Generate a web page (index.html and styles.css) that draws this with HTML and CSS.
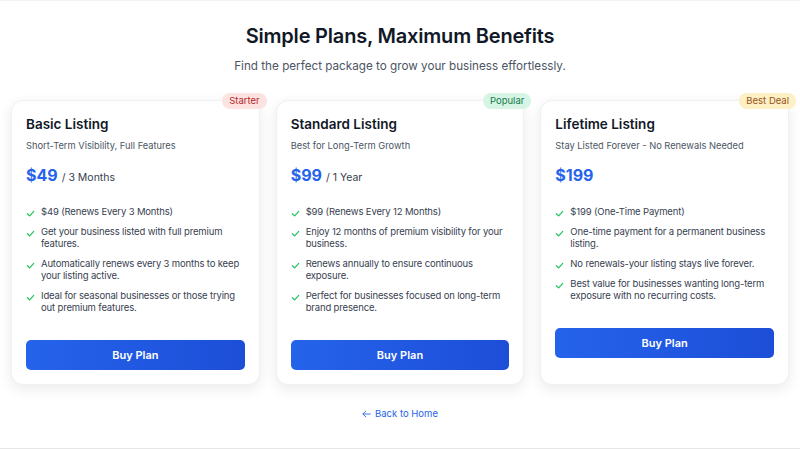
FILE: index.html
```html
<!DOCTYPE html>
<html lang="en">
<head>
<meta charset="utf-8">
<title>Simple Plans, Maximum Benefits</title>
<link rel="stylesheet" href="styles.css">
</head>
<body>
<div class="page">
  <header class="head">
    <h1 class="title">Simple Plans, Maximum Benefits</h1>
    <p class="lead">Find the perfect package to grow your business effortlessly.</p>
  </header>

  <section class="plans">
    <article class="card">
      <span class="badge badge-red">Starter</span>
      <h2 class="card-title">Basic Listing</h2>
      <p class="card-sub">Short-Term Visibility, Full Features</p>
      <div class="price"><span class="amount">$49</span><span class="period">/ 3 Months</span></div>
      <ul class="features">
        <li><svg class="check" viewBox="0 0 10 10"><polyline points="1.5,5.2 4,7.6 8.6,2.6"/></svg><span>$49 (Renews Every 3 Months)</span></li>
        <li><svg class="check" viewBox="0 0 10 10"><polyline points="1.5,5.2 4,7.6 8.6,2.6"/></svg><span>Get your business listed with full premium features.</span></li>
        <li><svg class="check" viewBox="0 0 10 10"><polyline points="1.5,5.2 4,7.6 8.6,2.6"/></svg><span>Automatically renews every 3 months to keep your listing active.</span></li>
        <li><svg class="check" viewBox="0 0 10 10"><polyline points="1.5,5.2 4,7.6 8.6,2.6"/></svg><span>Ideal for seasonal businesses or those trying out premium features.</span></li>
      </ul>
      <button class="buy">Buy Plan</button>
    </article>

    <article class="card">
      <span class="badge badge-green">Popular</span>
      <h2 class="card-title">Standard Listing</h2>
      <p class="card-sub">Best for Long-Term Growth</p>
      <div class="price"><span class="amount">$99</span><span class="period">/ 1 Year</span></div>
      <ul class="features">
        <li><svg class="check" viewBox="0 0 10 10"><polyline points="1.5,5.2 4,7.6 8.6,2.6"/></svg><span>$99 (Renews Every 12 Months)</span></li>
        <li><svg class="check" viewBox="0 0 10 10"><polyline points="1.5,5.2 4,7.6 8.6,2.6"/></svg><span>Enjoy 12 months of premium visibility for your business.</span></li>
        <li><svg class="check" viewBox="0 0 10 10"><polyline points="1.5,5.2 4,7.6 8.6,2.6"/></svg><span>Renews annually to ensure continuous exposure.</span></li>
        <li><svg class="check" viewBox="0 0 10 10"><polyline points="1.5,5.2 4,7.6 8.6,2.6"/></svg><span>Perfect for businesses focused on long-term brand presence.</span></li>
      </ul>
      <button class="buy">Buy Plan</button>
    </article>

    <article class="card">
      <span class="badge badge-amber">Best Deal</span>
      <h2 class="card-title">Lifetime Listing</h2>
      <p class="card-sub">Stay Listed Forever - No Renewals Needed</p>
      <div class="price"><span class="amount">$199</span></div>
      <ul class="features">
        <li><svg class="check" viewBox="0 0 10 10"><polyline points="1.5,5.2 4,7.6 8.6,2.6"/></svg><span>$199 (One-Time Payment)</span></li>
        <li><svg class="check" viewBox="0 0 10 10"><polyline points="1.5,5.2 4,7.6 8.6,2.6"/></svg><span>One-time payment for a permanent business listing.</span></li>
        <li><svg class="check" viewBox="0 0 10 10"><polyline points="1.5,5.2 4,7.6 8.6,2.6"/></svg><span>No renewals-your listing stays live forever.</span></li>
        <li><svg class="check" viewBox="0 0 10 10"><polyline points="1.5,5.2 4,7.6 8.6,2.6"/></svg><span>Best value for businesses wanting long-term exposure with no recurring costs.</span></li>
      </ul>
      <button class="buy">Buy Plan</button>
    </article>
  </section>

  <div class="back-row">
    <a class="back" href="#"><svg class="arrow" viewBox="0 0 12 10"><path d="M11 5H1.5M5 1.2L1.2 5L5 8.8"/></svg>Back to Home</a>
  </div>
</div>
</body>
</html>
```

FILE: styles.css
```css
* { box-sizing: border-box; }

html, body {
  margin: 0;
  padding: 0;
  background: #ffffff;
}

body {
  font-family: "Inter", "Noto Sans", sans-serif;
  color: #111827;
}

.page {
  border-top: 1px solid #f1f2f4;
  border-bottom: 1px solid #e5e7eb;
  padding: 21px 11px 27px;
}

.head {
  text-align: center;
}

.title {
  margin: 0;
  font-size: 20px;
  line-height: 28px;
  font-weight: 600;
  color: #111827;
  letter-spacing: -0.2px;
}

.lead {
  margin: 7px 0 0;
  font-size: 11.7px;
  line-height: 18px;
  color: #4b5563;
}

.plans {
  margin-top: 25px;
  display: grid;
  grid-template-columns: repeat(3, 1fr);
  gap: 16px;
}

.card {
  position: relative;
  display: flex;
  flex-direction: column;
  align-items: stretch;
  background: #ffffff;
  border: 1px solid #eef0f3;
  border-radius: 12px;
  box-shadow: 0 4px 14px rgba(17, 24, 39, 0.09);
  padding: 13px 14px 14px;
}

.badge {
  position: absolute;
  top: -8px;
  right: -8px;
  height: 16px;
  line-height: 16px;
  padding: 0 7px;
  border-radius: 8px;
  font-size: 9.5px;
}

.badge-red { background: #fde2e2; color: #b42a2a; }
.badge-green { background: #d6f5e5; color: #137a4c; }
.badge-amber { background: #fdf0c4; color: #95541a; }

.card-title {
  margin: 0;
  font-size: 13.5px;
  line-height: 20px;
  font-weight: 600;
  color: #111827;
}

.card-sub {
  margin: 5px 0 0;
  font-size: 9.3px;
  line-height: 14px;
  color: #4b5563;
}

.price {
  margin-top: 10px;
  height: 24px;
  display: flex;
  align-items: baseline;
  gap: 4px;
}

.amount {
  font-size: 16px;
  line-height: 24px;
  font-weight: 700;
  color: #2563eb;
}

.period {
  font-size: 10.5px;
  color: #374151;
}

.features {
  list-style: none;
  margin: 19px 0 0;
  padding: 0;
  display: flex;
  flex-direction: column;
  gap: 8px;
}

.features li {
  display: flex;
  align-items: flex-start;
  gap: 6px;
  font-size: 9.5px;
  line-height: 12px;
  letter-spacing: -0.15px;
  color: #374151;
}

.check {
  flex: none;
  width: 9px;
  height: 9px;
  margin-top: 3px;
  fill: none;
  stroke: #22c55e;
  stroke-width: 1.4;
  stroke-linecap: round;
  stroke-linejoin: round;
}

.buy {
  margin-top: 26px;
  height: 30px;
  border: none;
  border-radius: 5px;
  background: linear-gradient(90deg, #2563eb, #1d4ed8);
  color: #ffffff;
  font-family: inherit;
  font-size: 11px;
  font-weight: 600;
  cursor: pointer;
}

.back-row {
  margin-top: 20px;
  text-align: center;
  line-height: 14px;
}

.back {
  display: inline-flex;
  align-items: center;
  gap: 4px;
  font-size: 9.5px;
  color: #2563eb;
  text-decoration: none;
}

.arrow {
  width: 9px;
  height: 8px;
  fill: none;
  stroke: #2563eb;
  stroke-width: 1.2;
  stroke-linecap: round;
  stroke-linejoin: round;
}
```
